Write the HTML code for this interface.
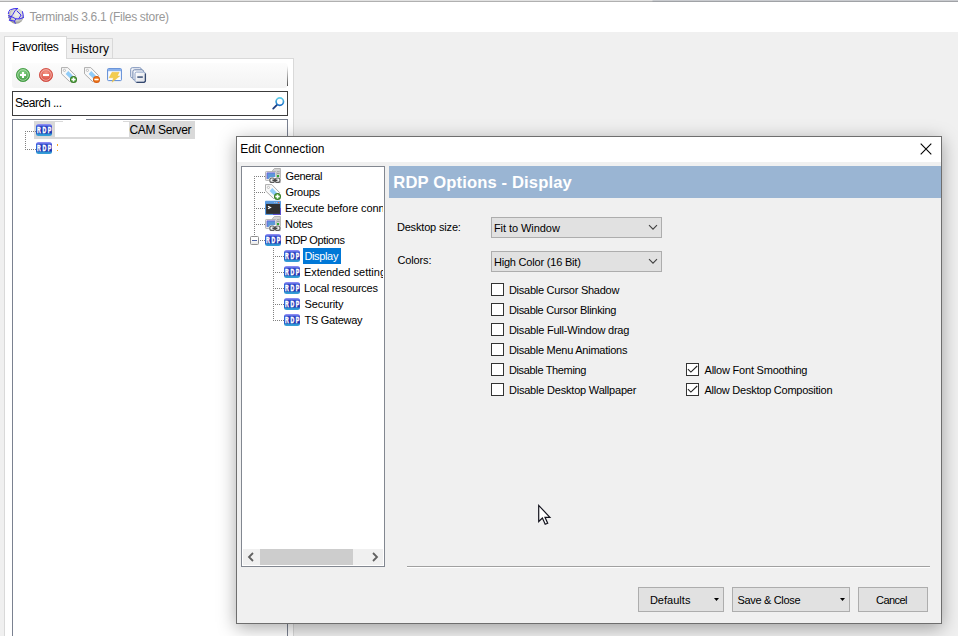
<!DOCTYPE html>
<html lang="en">
<head>
<meta charset="utf-8">
<title>Terminals 3.6.1 (Files store)</title>
<style>
html,body{margin:0;padding:0;}
body{width:958px;height:636px;position:relative;overflow:hidden;background:#f0f0f0;font-family:"Liberation Sans",sans-serif;}
.a{position:absolute;box-sizing:border-box;}
.t{position:absolute;white-space:nowrap;height:16px;line-height:16px;font-family:"Liberation Sans",sans-serif;}
svg{position:absolute;overflow:visible;}
.cb{position:absolute;box-sizing:border-box;width:13px;height:13px;border:1px solid #333;background:#fff;}
.btn{position:absolute;box-sizing:border-box;height:25px;top:587px;border:1px solid #adadad;background:#e1e1e1;}
.combo{position:absolute;box-sizing:border-box;left:491px;width:171px;height:21px;border:1px solid #adadad;background:#e1e1e1;}
.dotv{position:absolute;width:1px;background-image:linear-gradient(#808080 50%,transparent 50%);background-size:1px 2px;}
.doth{position:absolute;height:1px;background-image:linear-gradient(90deg,#808080 50%,transparent 50%);background-size:2px 1px;}
</style>
</head>
<body>
<svg width="0" height="0">
<defs>
<linearGradient id="gRdp" x1="0" y1="0" x2="0" y2="1"><stop offset="0" stop-color="#9090f4"/><stop offset=".1" stop-color="#8080ee"/><stop offset=".16" stop-color="#3a5cd8"/><stop offset=".76" stop-color="#2240b4"/><stop offset=".82" stop-color="#2a8ed0"/><stop offset="1" stop-color="#38a0d8"/></linearGradient>
<g id="rdp"><rect x="0" y="2" width="16" height="12" rx="2.5" fill="url(#gRdp)"/><rect x="1.2" y="4.6" width="13.6" height="6.6" rx="1" fill="#1414a0" fill-opacity=".42"/><text transform="translate(1,11) scale(.6,1)" font-family="Liberation Sans, sans-serif" font-weight="700" font-size="8.6" letter-spacing="2.8" fill="#fff" stroke="#fff" stroke-width=".5">RDP</text></g>
<radialGradient id="gGreen" cx=".5" cy=".35" r=".7"><stop offset="0" stop-color="#8fd88f"/><stop offset="1" stop-color="#2f8a2f"/></radialGradient>
<radialGradient id="gRed" cx=".5" cy=".35" r=".7"><stop offset="0" stop-color="#f59a8a"/><stop offset="1" stop-color="#d03a30"/></radialGradient>
<g id="tag"><path d="M0.5 0.6 L6.8 0.6 L14.6 8.6 L8.6 14.6 L0.5 6.8 Z" fill="#f8f8f8" stroke="#aeaeae" stroke-width="1" stroke-linejoin="round"/><path d="M4.6 6.9 L7.3 4.1 L11.9 8.7 L9.2 11.5 Z" fill="#90ccf8"/><circle cx="3.4" cy="3.4" r="1.1" fill="#fff" stroke="#a8a8a8" stroke-width=".7"/></g>
<radialGradient id="gBg" cx=".5" cy=".5" r=".5"><stop offset="0" stop-color="#6cc05a"/><stop offset=".6" stop-color="#4aa038"/><stop offset="1" stop-color="#2a6a1a"/></radialGradient>
<radialGradient id="gBo" cx=".5" cy=".5" r=".5"><stop offset="0" stop-color="#f88a28"/><stop offset=".6" stop-color="#ee7014"/><stop offset="1" stop-color="#c85008"/></radialGradient>
<g id="bplus"><circle cx="12.5" cy="12.5" r="3.5" fill="url(#gBg)"/><path d="M12.5 10.4v4.2M10.4 12.5h4.2" stroke="#fff" stroke-width="1.5"/></g>
<g id="bminus"><circle cx="12.5" cy="12.5" r="3.5" fill="url(#gBo)"/><path d="M10.4 12.5h4.2" stroke="#fff" stroke-width="1.5"/></g>
<linearGradient id="gStk" x1="0" y1="0" x2="1" y2="1"><stop offset="0" stop-color="#ffffff"/><stop offset="1" stop-color="#dcdfe6"/></linearGradient>
<g id="pc">
<path d="M9.4 .5 H15.4 V14.6 H7.6 V2.4 Z" fill="#d4d4d4" stroke="#a4a4a4" stroke-width=".8"/>
<rect x="12" y="3.4" width="2.6" height=".8" fill="#909090"/><rect x="12" y="5" width="2.6" height=".8" fill="#909090"/><rect x="12" y="7" width="2" height="2.2" fill="#30a830"/>
<rect x="0.5" y="3.5" width="10.6" height="9" rx=".8" fill="#e8e8e8" stroke="#a8a8a8" stroke-width=".8"/>
<rect x="2" y="4.9" width="8" height="6" fill="#5c98d8"/><path d="M2 10.9 V4.9 H10" stroke="#6a5cdc" stroke-width=".8" fill="none"/>
<rect x="3.8" y="9" width="12" height="6.4" rx="3" fill="#fff" fill-opacity=".92"/>
<rect x="4.8" y="10" width="4.8" height="4.4" rx="2" fill="#f2f2f2" stroke="#5c5c5c" stroke-width="1.1"/>
<rect x="10.2" y="10" width="4.8" height="4.4" rx="2" fill="#f2f2f2" stroke="#5c5c5c" stroke-width="1.1"/>
<rect x="7.4" y="11.5" width="5" height="1.5" fill="#444"/>
</g>
</defs>
</svg>

<!-- top edge + title bar -->
<div class="a" style="left:0;top:0;width:958px;height:32px;background:#fff;"></div>
<div class="a" style="left:0;top:0;width:958px;height:1px;background:linear-gradient(90deg,#e2e2e2 652px,#c9cbcf 653px);"></div>
<div class="a" style="left:0;top:1px;width:958px;height:1px;background:linear-gradient(90deg,#b0b0b0 652px,#a0a2a6 653px);"></div>
<!-- app icon -->
<svg style="left:8px;top:8px" width="16" height="16" viewBox="0 0 16 16">
<defs><radialGradient id="gBall" cx=".55" cy=".4" r=".62"><stop offset="0" stop-color="#f2f2f0"/><stop offset=".6" stop-color="#d6d6d2"/><stop offset="1" stop-color="#8e8e86"/></radialGradient></defs>
<circle cx="8" cy="8" r="7.7" fill="url(#gBall)"/>
<g fill="none" stroke="#3c2cf0" stroke-width="1" stroke-linecap="round" stroke-linejoin="round">
<path d="M3 1.5 Q6 .2 9.6 .5 M2.1 1.6 Q.5 3.2 .3 5.6"/>
<path d="M9.6 .5 L7.2 2.4 L4.8 6.5 L3 8.7 L.5 7.4"/>
<path d="M9 3 L13.1 7 L10.9 10.6"/>
<path d="M.6 9.2 L3.5 8.6 L7.9 10.9 L11.8 10.9 L15.3 9.6"/>
<path d="M14.5 3.6 Q15.3 6.5 15.3 9.6"/>
<path d="M1.5 12.2 L6.5 13.1 L7.2 15.4 M6.5 13.1 L7.9 10.9 M1.5 12.2 L3.5 8.6"/>
</g>
</svg>

<!-- tab control -->
<div class="a" style="left:4px;top:58px;width:290px;height:600px;background:#fff;border:1px solid #d9d9d9;"></div>
<div class="a" style="left:66px;top:38px;width:47px;height:21px;background:#f0f0f0;border:1px solid #d9d9d9;"></div>
<div class="a" style="left:4px;top:36px;width:63px;height:23px;background:#fff;border:1px solid #d9d9d9;border-bottom:none;"></div>

<!-- toolbar -->
<div class="a" style="left:12px;top:63px;width:276px;height:25px;border-radius:0 4px 4px 3px;background:linear-gradient(#fcfcfc,#f3f3f3);"></div>
<div class="a" style="left:287px;top:66px;width:1px;height:20px;background:linear-gradient(rgba(110,110,110,0),#505050);"></div>
<!-- green plus -->
<svg style="left:16px;top:68px" width="14" height="14" viewBox="0 0 14 14"><circle cx="7" cy="7" r="6.6" fill="url(#gGreen)" stroke="#3c9a3c" stroke-width=".8"/><circle cx="7" cy="7" r="5.3" fill="none" stroke="#c8ecc8" stroke-width=".7"/><path d="M7 4v6M4 7h6" stroke="#fff" stroke-width="2"/></svg>
<!-- red minus -->
<svg style="left:39px;top:68px" width="14" height="14" viewBox="0 0 14 14"><circle cx="7" cy="7" r="6.6" fill="url(#gRed)" stroke="#d04a40" stroke-width=".8"/><circle cx="7" cy="7" r="5.3" fill="none" stroke="#f8cac4" stroke-width=".7"/><path d="M4 7h6" stroke="#fff" stroke-width="2"/></svg>
<!-- tag plus -->
<svg style="left:61px;top:67px" width="16" height="16" viewBox="0 0 16 16"><use href="#tag"/><use href="#bplus"/></svg>
<!-- tag minus -->
<svg style="left:84px;top:67px" width="16" height="16" viewBox="0 0 16 16"><use href="#tag"/><use href="#bminus"/></svg>
<!-- window lightning -->
<svg style="left:107px;top:67px" width="16" height="16" viewBox="0 0 16 16"><rect x=".6" y="1.6" width="13.8" height="12" rx=".8" fill="#fcfdff" stroke="#5c8ad6" stroke-width="1"/><rect x="1" y="2" width="13" height="2.2" fill="#8cb2ec"/><path d="M5 5.3 L12.2 5.3 L10.3 9 L12.8 9 L5 15.2 L6.5 10.8 L2.1 10.8 Z" fill="#f2cc50" stroke="#e8b838" stroke-width=".4"/></svg>
<!-- stacked minus -->
<svg style="left:130px;top:67px" width="16" height="16" viewBox="0 0 16 16"><rect x=".7" y=".7" width="10.6" height="10.2" rx="1.6" fill="#f4f6fa" stroke="#7c92ba" stroke-width="1"/><rect x="2.9" y="2.8" width="10.6" height="10.2" rx="1.6" fill="#f4f6fa" stroke="#6c82aa" stroke-width="1"/><rect x="5" y="5.1" width="10.4" height="10.2" rx="1.6" fill="url(#gStk)" stroke="#8ea2c6" stroke-width="1"/><path d="M15.4 6.4 V13.7 a1.6 1.6 0 0 1 -1.6 1.6 H6.4" stroke="#34486e" stroke-width="1.3" fill="none"/><rect x="7.3" y="9.2" width="5.5" height="1.8" fill="#5a6c8c"/></svg>

<!-- search box -->
<div class="a" style="left:12px;top:91px;width:276px;height:25px;background:#fff;border:1px solid #3c3c3c;"></div>
<svg style="left:272px;top:96px" width="14" height="14" viewBox="0 0 14 14">
<defs><linearGradient id="gMag" x1="0" y1="0" x2="0" y2="1"><stop offset="0" stop-color="#62cfea"/><stop offset="1" stop-color="#1a70c8"/></linearGradient></defs>
<path d="M5.2 8.6 L1.2 12.6" stroke="#1c3c80" stroke-width="1.8" stroke-linecap="round"/><circle cx="7.8" cy="5.6" r="3.7" fill="#fff" stroke="url(#gMag)" stroke-width="1.7"/></svg>

<!-- main tree -->
<div class="a" style="left:12px;top:119px;width:276px;height:530px;background:#fff;border:1px solid #7a8190;"></div>
<div class="a" style="left:34px;top:121px;width:161px;height:18px;background:#d9d9d9;"></div>
<div class="a" style="left:55px;top:122px;width:74px;height:15px;background:#fff;"></div>
<div class="a" style="left:63px;top:121px;width:60px;height:3px;background:#fff;"></div>
<div class="a" style="left:71px;top:118px;width:15px;height:5px;background:#fff;"></div>
<div class="dotv" style="left:25px;top:131px;height:19px;"></div>
<div class="doth" style="left:25px;top:131px;width:11px;"></div>
<div class="doth" style="left:25px;top:149px;width:11px;"></div>
<svg style="left:36px;top:122px" width="16" height="16" viewBox="0 0 16 16"><use href="#rdp"/></svg>
<svg style="left:36px;top:140px" width="16" height="16" viewBox="0 0 16 16"><use href="#rdp"/></svg>
<div class="a" style="left:57px;top:144px;width:1px;height:2px;background:#f5a623;"></div>
<div class="a" style="left:57px;top:150px;width:1px;height:1px;background:#f5a623;"></div>

<span class="t" style="left:29.5px;top:8.5px;font-size:12px;color:#999;letter-spacing:-0.305px;">Terminals 3.6.1 (Files store)</span>
<span class="t" style="left:12px;top:38.5px;font-size:12px;color:#000;letter-spacing:-0.320px;">Favorites</span>
<span class="t" style="left:71px;top:40.5px;font-size:12px;color:#000;letter-spacing:0.109px;">History</span>
<span class="t" style="left:15px;top:95.0px;font-size:12px;color:#000;letter-spacing:-0.484px;">Search ...</span>
<span class="t" style="left:129.5px;top:122.0px;font-size:12px;color:#000;letter-spacing:-0.372px;">CAM Server</span>

<!-- ================= dialog ================= -->
<div class="a" style="left:236px;top:136px;width:706px;height:488px;background:#f0f0f0;border:1px solid #6e6e6e;box-shadow:0 4px 17px rgba(0,0,0,.34);"></div>
<div class="a" style="left:237px;top:137px;width:704px;height:25px;background:#fff;"></div>
<!-- close X -->
<svg style="left:920px;top:143px" width="12" height="12" viewBox="0 0 12 12"><path d="M.7 .7 L11.3 11.3 M11.3 .7 L.7 11.3" stroke="#000" stroke-width="1.1" fill="none"/></svg>

<!-- dialog tree -->
<div class="a" style="left:241px;top:166px;width:144px;height:401px;background:#fff;border:1px solid #828790;"></div>
<div class="a" style="left:0;top:0;width:383px;height:636px;overflow:hidden;">
<div class="a" style="left:303px;top:248px;width:38px;height:16px;background:#0078d7;"></div>
<span class="t" style="left:285.5px;top:168.0px;font-size:11px;color:#000;letter-spacing:-0.357px;">General</span>
<span class="t" style="left:285.5px;top:184.0px;font-size:11px;color:#000;letter-spacing:-0.316px;">Groups</span>
<span class="t" style="left:284.9px;top:200.0px;font-size:11px;color:#000;letter-spacing:-0.059px;">Execute before connection</span>
<span class="t" style="left:284.9px;top:216.0px;font-size:11px;color:#000;letter-spacing:-0.188px;">Notes</span>
<span class="t" style="left:284.9px;top:232.0px;font-size:11px;color:#000;letter-spacing:-0.400px;">RDP Options</span>
<span class="t" style="left:304.4px;top:248.0px;font-size:11px;color:#fff;letter-spacing:-0.346px;">Display</span>
<span class="t" style="left:303.9px;top:264.0px;font-size:11px;color:#000;letter-spacing:0.011px;">Extended settings</span>
<span class="t" style="left:303.9px;top:280.0px;font-size:11px;color:#000;letter-spacing:-0.261px;">Local resources</span>
<span class="t" style="left:304.5px;top:296.0px;font-size:11px;color:#000;letter-spacing:-0.107px;">Security</span>
<span class="t" style="left:304.5px;top:312.0px;font-size:11px;color:#000;letter-spacing:-0.281px;">TS Gateway</span>
</div>
<div class="dotv" style="left:254px;top:176px;height:60px;"></div>
<div class="doth" style="left:254px;top:176px;width:11px;"></div>
<div class="doth" style="left:254px;top:192px;width:11px;"></div>
<div class="doth" style="left:254px;top:208px;width:11px;"></div>
<div class="doth" style="left:254px;top:224px;width:11px;"></div>
<div class="doth" style="left:260px;top:240px;width:5px;"></div>
<div class="dotv" style="left:273px;top:248px;height:73px;"></div>
<div class="doth" style="left:273px;top:256px;width:11px;"></div>
<div class="doth" style="left:273px;top:272px;width:11px;"></div>
<div class="doth" style="left:273px;top:288px;width:11px;"></div>
<div class="doth" style="left:273px;top:304px;width:11px;"></div>
<div class="doth" style="left:273px;top:320px;width:11px;"></div>
<!-- expander -->
<div class="a" style="left:250px;top:236px;width:9px;height:9px;background:linear-gradient(#fff 40%,#e6e6e6);border:1px solid #8e8e8e;border-radius:1.5px;"></div>
<div class="a" style="left:252px;top:240px;width:5px;height:1px;background:#4b63a7;"></div>
<!-- tree icons -->
<svg style="left:265px;top:168px" width="16" height="16" viewBox="0 0 16 16"><use href="#pc"/></svg>
<svg style="left:265px;top:184px" width="16" height="16" viewBox="0 0 16 16"><use href="#tag"/><use href="#bplus"/></svg>
<svg style="left:265px;top:200px" width="16" height="16" viewBox="0 0 16 16"><rect x="0" y=".8" width="16" height="14.2" rx=".8" fill="#5a9ae0"/><rect x="8" y="13.9" width="8" height="1.1" fill="#5a50d0"/><rect x="15" y="8" width="1" height="7" fill="#5a50d0"/><rect x="1.1" y="3.9" width="13.9" height="10" fill="#303030"/><rect x="13" y="2" width="1.2" height="1.2" fill="#f06030"/><rect x="9.2" y="2.2" width="1" height=".8" fill="#c8c8c8"/><rect x="11" y="2.2" width="1" height=".8" fill="#c8c8c8"/><path d="M3 6.2 L5.4 7.5 L3 8.8" stroke="#fff" stroke-width="1.3" fill="none"/></svg>
<svg style="left:265px;top:216px" width="16" height="16" viewBox="0 0 16 16"><use href="#pc"/></svg>
<svg style="left:265px;top:232px" width="16" height="16" viewBox="0 0 16 16"><use href="#rdp"/></svg>
<svg style="left:284px;top:248px" width="16" height="16" viewBox="0 0 16 16"><use href="#rdp"/></svg>
<svg style="left:284px;top:264px" width="16" height="16" viewBox="0 0 16 16"><use href="#rdp"/></svg>
<svg style="left:284px;top:280px" width="16" height="16" viewBox="0 0 16 16"><use href="#rdp"/></svg>
<svg style="left:284px;top:296px" width="16" height="16" viewBox="0 0 16 16"><use href="#rdp"/></svg>
<svg style="left:284px;top:312px" width="16" height="16" viewBox="0 0 16 16"><use href="#rdp"/></svg>
<!-- h scrollbar -->
<div class="a" style="left:243px;top:549px;width:140px;height:16px;background:#f0f0f0;"></div>
<div class="a" style="left:260px;top:549px;width:93px;height:16px;background:#cdcdcd;"></div>
<svg style="left:247px;top:552px" width="8" height="10" viewBox="0 0 8 10"><path d="M6 1 L2 5 L6 9" stroke="#606060" stroke-width="1.8" fill="none"/></svg>
<svg style="left:371px;top:552px" width="8" height="10" viewBox="0 0 8 10"><path d="M2 1 L6 5 L2 9" stroke="#606060" stroke-width="1.8" fill="none"/></svg>

<!-- header -->
<div class="a" style="left:389px;top:166px;width:552px;height:32px;background:#9ab5d3;"></div>

<!-- combos -->
<div class="combo" style="top:217px;"></div>
<div class="combo" style="top:251px;"></div>
<svg style="left:648px;top:224px" width="10" height="7" viewBox="0 0 10 7"><path d="M1 1.2 L5 5.2 L9 1.2" stroke="#404040" stroke-width="1.1" fill="none"/></svg>
<svg style="left:648px;top:258px" width="10" height="7" viewBox="0 0 10 7"><path d="M1 1.2 L5 5.2 L9 1.2" stroke="#404040" stroke-width="1.1" fill="none"/></svg>

<!-- checkboxes -->
<div class="cb" style="left:491px;top:283px;"></div>
<div class="cb" style="left:491px;top:303px;"></div>
<div class="cb" style="left:491px;top:323px;"></div>
<div class="cb" style="left:491px;top:343px;"></div>
<div class="cb" style="left:491px;top:363px;"></div>
<div class="cb" style="left:491px;top:383px;"></div>
<div class="cb" style="left:686px;top:363px;"></div>
<div class="cb" style="left:686px;top:383px;"></div>
<svg style="left:686px;top:363px" width="13" height="13" viewBox="0 0 13 13"><path d="M1.9 6.1 L4.9 9.1 L11.2 3" stroke="#222" stroke-width="1.1" fill="none"/></svg>
<svg style="left:686px;top:383px" width="13" height="13" viewBox="0 0 13 13"><path d="M1.9 6.1 L4.9 9.1 L11.2 3" stroke="#222" stroke-width="1.1" fill="none"/></svg>

<!-- separator -->
<div class="a" style="left:407px;top:566px;width:523px;height:1px;background:#a0a0a0;"></div>
<div class="a" style="left:407px;top:567px;width:523px;height:1px;background:#fff;"></div>

<!-- buttons -->
<div class="btn" style="left:638px;width:86px;"></div>
<div class="btn" style="left:732px;width:118px;"></div>
<div class="btn" style="left:858px;width:70px;"></div>
<svg style="left:714px;top:598px" width="6" height="4" viewBox="0 0 6 4"><path d="M0 0 H5 L2.5 3 Z" fill="#000"/></svg>
<svg style="left:840px;top:598px" width="6" height="4" viewBox="0 0 6 4"><path d="M0 0 H5 L2.5 3 Z" fill="#000"/></svg>

<span class="t" style="left:240.2px;top:141.0px;font-size:12px;color:#000;letter-spacing:-0.031px;">Edit Connection</span>
<span class="t" style="left:393.3px;top:175.0px;font-size:16.6px;color:#fff;letter-spacing:0.134px;font-weight:700;">RDP Options - Display</span>
<span class="t" style="left:396.9px;top:219.0px;font-size:11px;color:#000;letter-spacing:-0.169px;">Desktop size:</span>
<span class="t" style="left:397.5px;top:252.0px;font-size:11px;color:#000;letter-spacing:-0.141px;">Colors:</span>
<span class="t" style="left:493.9px;top:220.0px;font-size:11px;color:#000;letter-spacing:-0.053px;">Fit to Window</span>
<span class="t" style="left:493.9px;top:254.0px;font-size:11px;color:#000;letter-spacing:-0.194px;">High Color (16 Bit)</span>
<span class="t" style="left:508.9px;top:282.0px;font-size:11px;color:#000;letter-spacing:-0.253px;">Disable Cursor Shadow</span>
<span class="t" style="left:508.9px;top:302.0px;font-size:11px;color:#000;letter-spacing:-0.310px;">Disable Cursor Blinking</span>
<span class="t" style="left:508.9px;top:322.0px;font-size:11px;color:#000;letter-spacing:-0.210px;">Disable Full-Window drag</span>
<span class="t" style="left:508.9px;top:342.0px;font-size:11px;color:#000;letter-spacing:-0.256px;">Disable Menu Animations</span>
<span class="t" style="left:508.9px;top:362.0px;font-size:11px;color:#000;letter-spacing:-0.346px;">Disable Theming</span>
<span class="t" style="left:508.9px;top:382.0px;font-size:11px;color:#000;letter-spacing:-0.199px;">Disable Desktop Wallpaper</span>
<span class="t" style="left:704.5px;top:362.0px;font-size:11px;color:#000;letter-spacing:-0.211px;">Allow Font Smoothing</span>
<span class="t" style="left:704.5px;top:382.0px;font-size:11px;color:#000;letter-spacing:-0.245px;">Allow Desktop Composition</span>
<span class="t" style="left:649.9px;top:592.0px;font-size:11px;color:#000;letter-spacing:0.020px;">Defaults</span>
<span class="t" style="left:737.5px;top:592.0px;font-size:11px;color:#000;letter-spacing:-0.332px;">Save &amp; Close</span>
<span class="t" style="left:876px;top:592.0px;font-size:11px;color:#000;letter-spacing:-0.550px;">Cancel</span>

<!-- mouse cursor -->
<svg style="left:538px;top:505px" width="13" height="20" viewBox="0 0 13 20"><path d="M.7 .4 V16.5 L4.4 13 L7.2 19.2 L9.7 18.2 L7 12.3 H11.9 Z" fill="#fff" stroke="#14141e" stroke-width="1.2" stroke-linejoin="miter"/></svg>

</body>
</html>
